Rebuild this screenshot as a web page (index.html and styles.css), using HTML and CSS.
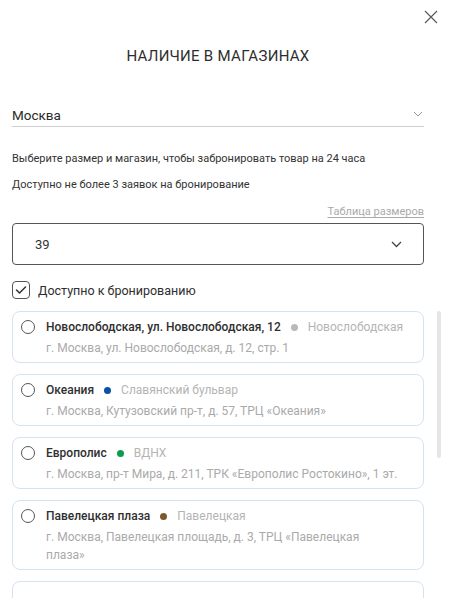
FILE: index.html
```html
<!DOCTYPE html>
<html lang="ru">
<head>
<meta charset="utf-8">
<title>Наличие в магазинах</title>
<link rel="stylesheet" href="styles.css">
</head>
<body>
<div class="modal">
  <div class="top">
    <button class="close" aria-label="Закрыть">
      <svg width="14" height="14" viewBox="0 0 14 14"><path d="M1 1L13 13M13 1L1 13" stroke="#5a5a5a" stroke-width="1.2" fill="none"/></svg>
    </button>
  </div>
  <div class="content">
    <h1 class="title">НАЛИЧИЕ В МАГАЗИНАХ</h1>
    <div class="city">
      <span class="city-name">Москва</span>
      <svg class="city-chev" width="10" height="6" viewBox="0 0 10 6"><path d="M1 1L5 5L9 1" stroke="#9a9a9a" stroke-width="1" fill="none"/></svg>
    </div>
    <p class="note first">Выберите размер и магазин, чтобы забронировать товар на 24 часа</p>
    <p class="note second">Доступно не более 3 заявок на бронирование</p>
    <div class="link-row"><a class="size-link" href="#">Таблица размеров</a></div>
    <div class="select">
      <span class="select-value">39</span>
      <svg width="11" height="7" viewBox="0 0 11 7"><path d="M1 1L5.5 5.5L10 1" stroke="#444" stroke-width="1.3" fill="none"/></svg>
    </div>
    <label class="check-row">
      <span class="checkbox"><svg width="12" height="10" viewBox="0 0 12 10"><path d="M1.5 5L4.5 8L10.5 2" stroke="#333" stroke-width="1.5" fill="none" stroke-linecap="round" stroke-linejoin="round"/></svg></span>
      <span class="check-text">Доступно к бронированию</span>
    </label>
  </div>
  <div class="list-wrap">
    <div class="list">
      <div class="card">
        <span class="radio"></span>
        <div class="name-line"><span class="name">Новослободская, ул. Новослободская, 12</span><span class="dot dot-gray"></span><span class="metro">Новослободская</span></div>
        <div class="addr">г. Москва, ул. Новослободская, д. 12, стр. 1</div>
      </div>
      <div class="card">
        <span class="radio"></span>
        <div class="name-line"><span class="name">Океания</span><span class="dot dot-blue"></span><span class="metro">Славянский бульвар</span></div>
        <div class="addr">г. Москва, Кутузовский пр-т, д. 57, ТРЦ «Океания»</div>
      </div>
      <div class="card">
        <span class="radio"></span>
        <div class="name-line"><span class="name">Европолис</span><span class="dot dot-green"></span><span class="metro">ВДНХ</span></div>
        <div class="addr">г. Москва, пр-т Мира, д. 211, ТРК «Европолис Ростокино», 1 эт.</div>
      </div>
      <div class="card">
        <span class="radio"></span>
        <div class="name-line"><span class="name">Павелецкая плаза</span><span class="dot dot-brown"></span><span class="metro">Павелецкая</span></div>
        <div class="addr">г. Москва, Павелецкая площадь, д. 3, ТРЦ «Павелецкая плаза»</div>
      </div>
      <div class="card card-next" aria-hidden="true"></div>
    </div>
    <div class="scrollbar"></div>
  </div>
</div>
</body>
</html>
```
FILE: styles.css
```css
* { box-sizing: border-box; }
html, body { margin: 0; padding: 0; }
body {
  width: 450px;
  height: 598px;
  overflow: hidden;
  background: #fff;
  font-family: Roboto, "Noto Sans", Arial, sans-serif;
  color: #333;
}
.modal { width: 450px; }
.top {
  display: flex;
  justify-content: flex-end;
  padding: 10px 12px 0 0;
}
.close {
  border: 0;
  background: none;
  padding: 0;
  width: 14px;
  height: 14px;
  display: block;
  cursor: pointer;
}
.close svg { display: block; }
.content { padding: 0 26px 0 12px; }
.title {
  margin: 22px 0 0;
  text-align: center;
  font-size: 15px;
  line-height: 20px;
  font-weight: 400;
  letter-spacing: 0.3px;
  color: #2e2e2e;
}
.city {
  margin-top: 39px;
  display: flex;
  align-items: center;
  justify-content: space-between;
  border-bottom: 1px solid #cfcfcf;
  padding-bottom: 1px;
  height: 22px;
}
.city-name { font-size: 13.5px; line-height: 20px; color: #2a2a2a; }
.city-chev { margin-right: 1px; margin-top: -2px; }
.note {
  margin: 0;
  font-size: 11px;
  line-height: 16px;
  color: #333;
}
.note.first { margin-top: 24px; }
.note.second { margin-top: 10px; }
.link-row {
  margin-top: 11px;
  display: flex;
  justify-content: flex-end;
  line-height: 16px;
}
.size-link {
  font-size: 11px;
  color: #ababab;
  text-decoration: underline;
  text-underline-offset: 2px;
}
.select {
  margin-top: 3px;
  height: 42px;
  border: 1px solid #555;
  border-radius: 4px;
  display: flex;
  align-items: center;
  justify-content: space-between;
  padding: 0 21px 0 22px;
}
.select-value { font-size: 13px; color: #333; }
.select svg { display: block; }
.check-row {
  margin-top: 16px;
  display: flex;
  align-items: center;
  gap: 8px;
  height: 18px;
}
.checkbox {
  width: 18px;
  height: 18px;
  border: 1.5px solid #555;
  border-radius: 4px;
  display: flex;
  align-items: center;
  justify-content: center;
}
.checkbox svg { display: block; }
.check-text { font-size: 12.5px; color: #2e2e2e; }
.list-wrap {
  margin-top: 12px;
  padding-left: 12px;
  display: flex;
  gap: 13px;
  height: 287px;
  overflow: hidden;
}
.list {
  width: 412px;
  flex: 0 0 412px;
  display: flex;
  flex-direction: column;
  gap: 11px;
}
.scrollbar {
  width: 4px;
  height: 147px;
  border-radius: 2px;
  background: #e6e6e6;
  flex: 0 0 4px;
}
.card {
  border: 1px solid #d3e3f1;
  border-radius: 8px;
  padding: 5px 23px 5px 8px;
  display: grid;
  grid-template-columns: 14px 1fr;
  column-gap: 11px;
  row-gap: 2px;
  align-items: center;
}
.card-next {
  min-height: 52px;
  flex: 0 0 52px;
}
.radio {
  width: 14px;
  height: 14px;
  border: 1.5px solid #555;
  border-radius: 50%;
  grid-column: 1;
  grid-row: 1;
}
.name-line {
  grid-column: 2;
  grid-row: 1;
  display: flex;
  align-items: center;
  line-height: 20px;
  white-space: nowrap;
}
.name { font-size: 12px; font-weight: 500; color: #2f2f2f; }
.dot {
  width: 7px;
  height: 7px;
  border-radius: 50%;
  margin: 0 10px;
  flex: 0 0 7px;
}
.dot-gray { background: #b9b9b9; }
.dot-blue { background: #0b4fa6; }
.dot-green { background: #0a9c4f; }
.dot-brown { background: #7a5a2c; }
.metro { font-size: 12px; color: #b4b4b4; }
.addr {
  grid-column: 2;
  grid-row: 2;
  font-size: 12px;
  line-height: 18px;
  color: #aaaaaa;
}
```
